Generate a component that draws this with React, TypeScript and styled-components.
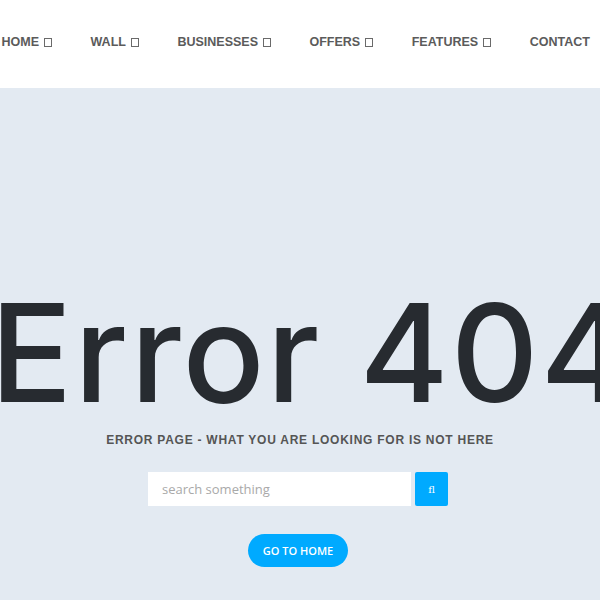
import React from "react";
import styled, { createGlobalStyle } from "styled-components";

const Global = createGlobalStyle`
  html, body { margin: 0; padding: 0; }
  body { background: #e3eaf2; overflow: hidden; }
  * { box-sizing: border-box; }
`;

const Page = styled.div`
  width: 600px;
  height: 600px;
  overflow: hidden;
  display: flex;
  flex-direction: column;
  background: #e3eaf2;
`;

const Nav = styled.nav`
  height: 88px;
  flex: none;
  background: #ffffff;
  display: flex;
  align-items: center;
  gap: 38.5px;
  padding: 0 0 4px 1.5px;
  white-space: nowrap;
`;

const NavItem = styled.a`
  font-family: "Liberation Sans", Arial, sans-serif;
  font-weight: 700;
  font-size: 12.5px;
  color: #5b5b5b;
  text-decoration: none;
  display: inline-flex;
  align-items: center;
  gap: 5px;
  line-height: 1;
`;

const Tofu = styled.span`
  display: inline-block;
  width: 8px;
  height: 9px;
  border: 1px solid #6a6a6a;
`;

const Main = styled.main`
  flex: 1;
  display: flex;
  flex-direction: column;
  align-items: center;
  padding-top: 197px;
`;

const Title = styled.h1`
  margin: 0 0 0 22px;
  font-family: Inter, "Noto Sans", sans-serif;
  font-weight: 500;
  font-size: 136px;
  line-height: 136px;
  color: #272b30;
  white-space: nowrap;
  letter-spacing: 2px;
`;

const Subtitle = styled.p`
  margin: 12px 0 0;
  font-family: "Liberation Sans", Arial, sans-serif;
  font-weight: 700;
  font-size: 12px;
  line-height: 14px;
  color: #555;
  letter-spacing: 0.75px;
`;

const SearchRow = styled.form`
  margin: 25px 4px 0 0;
  display: flex;
  gap: 4px;
`;

const SearchInput = styled.input`
  width: 263px;
  height: 34px;
  border: none;
  outline: none;
  background: #fff;
  padding: 0 14px;
  font-family: "Open Sans", sans-serif;
  font-size: 13px;
  color: #333;
  &::placeholder { color: #a9a9a9; }
`;

const SearchButton = styled.button`
  width: 33px;
  height: 34px;
  border: none;
  border-radius: 2px;
  background: #00aaff;
  color: #fff;
  font-family: "DejaVu Serif", serif;
  font-size: 10px;
  padding: 0;
`;

const HomeButton = styled.a`
  margin: 28px 4px 0 0;
  width: 100px;
  height: 33px;
  border-radius: 17px;
  background: #00aaff;
  color: #fff;
  font-family: "Open Sans", sans-serif;
  font-weight: 600;
  font-size: 11px;
  display: flex;
  align-items: center;
  justify-content: center;
  text-decoration: none;
`;

const items = ["HOME", "WALL", "BUSINESSES", "OFFERS", "FEATURES"];

export default function App() {
  return (
    <>
      <Global />
      <Page>
        <Nav>
          {items.map((t) => (
            <NavItem key={t} href="#">
              {t}
              <Tofu />
            </NavItem>
          ))}
          <NavItem href="#">CONTACT</NavItem>
        </Nav>
        <Main>
          <Title>Error 404</Title>
          <Subtitle>ERROR PAGE - WHAT YOU ARE LOOKING FOR IS NOT HERE</Subtitle>
          <SearchRow onSubmit={(e) => e.preventDefault()}>
            <SearchInput placeholder="search something" />
            <SearchButton type="submit">fl</SearchButton>
          </SearchRow>
          <HomeButton href="#">GO TO HOME</HomeButton>
        </Main>
      </Page>
    </>
  );
}
